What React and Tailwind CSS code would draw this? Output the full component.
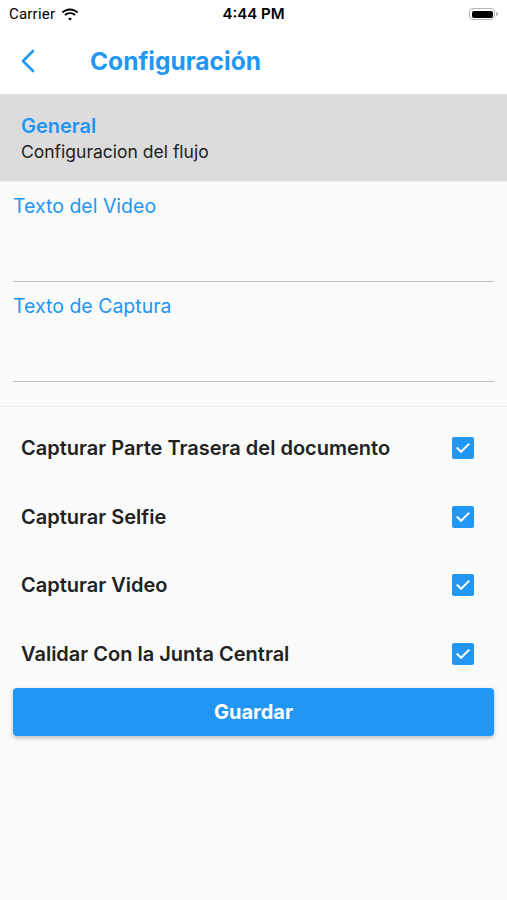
import React, { useState } from 'react';

const options = [
  'Capturar Parte Trasera del documento',
  'Capturar Selfie',
  'Capturar Video',
  'Validar Con la Junta Central',
];

const WifiIcon = () => (
  <svg width="18" height="13" viewBox="0 0 17 12" fill="#000">
    <path d="M8.5 2.2c2.5 0 4.8 1 6.5 2.6l1.3-1.3C14.2 1.5 11.5.3 8.5.3S2.8 1.5.7 3.5L2 4.8c1.7-1.6 4-2.6 6.5-2.6z" />
    <path d="M8.5 5.6c1.6 0 3 .6 4.1 1.6l1.3-1.3C12.5 4.6 10.6 3.8 8.5 3.8S4.5 4.6 3.1 5.9l1.3 1.3c1.1-1 2.5-1.6 4.1-1.6z" />
    <path d="M8.5 9c.7 0 1.3.3 1.8.7L8.5 11.6 6.7 9.7c.5-.4 1.1-.7 1.8-.7z" />
  </svg>
);

const Checkbox = ({ checked, onChange }) => (
  <button
    type="button"
    onClick={onChange}
    className={`flex h-[22px] w-[22px] items-center justify-center rounded-[2px] ${checked ? 'bg-[#2196f3]' : 'border-2 border-[#757575] bg-transparent'}`}
  >
    {checked && (
      <svg width="16" height="16" viewBox="0 0 16 16" fill="none">
        <path d="M2.5 8.2l3.6 3.6L13.6 4.3" stroke="#fff" strokeWidth="2" strokeLinecap="square" />
      </svg>
    )}
  </button>
);

const App = () => {
  const [checks, setChecks] = useState([true, true, true, true]);
  const [videoText, setVideoText] = useState('');
  const [captureText, setCaptureText] = useState('');

  const toggle = (i) => setChecks((prev) => prev.map((c, idx) => (idx === i ? !c : c)));

  return (
    <div className="flex min-h-[900px] w-full flex-col bg-[#fafafa] font-['Inter',sans-serif]">
      {/* status bar */}
      <div className="flex h-[28px] items-center justify-between bg-white px-[9px] text-[15px] text-black">
        <div className="flex w-[120px] items-center gap-[6px]">
          <span className="font-['Roboto',sans-serif] tracking-[0.2px]">Carrier</span>
          <WifiIcon />
        </div>
        <span className="font-semibold">4:44 PM</span>
        <div className="flex w-[120px] justify-end">
          <div className="flex items-center">
            <div className="h-[12px] w-[26px] rounded-[4px] border border-[#b5b5b5] p-[1.5px]">
              <div className="h-full w-full rounded-[2px] bg-black" />
            </div>
            <div className="ml-[1px] h-[4px] w-[1.5px] rounded-r bg-[#b5b5b5]" />
          </div>
        </div>
      </div>

      {/* nav bar */}
      <div className="flex h-[66px] items-center bg-white">
        <button type="button" className="flex w-[90px] items-center pl-[19px]">
          <svg width="18" height="26" viewBox="0 0 18 26" fill="none">
            <path d="M14 3L4 13l10 10" stroke="#2196f3" strokeWidth="2.6" strokeLinecap="round" strokeLinejoin="round" />
          </svg>
        </button>
        <h1 className="text-[24.5px] font-bold text-[#2196f3]">Configuración</h1>
      </div>

      {/* general header */}
      <div className="flex h-[87px] flex-col justify-center bg-[#dcdcdc] px-[21px] pt-[2px]">
        <p className="text-[20px] font-semibold leading-[27px] text-[#2196f3]">General</p>
        <p className="text-[17.5px] leading-[24px] text-[#222]">Configuracion del flujo</p>
      </div>

      {/* text inputs */}
      <div className="border-t border-[#eeeeee] border-b px-[13px] pb-[24px]">
        <div className="pt-[12px]">
          <label className="block text-[19.5px] leading-[24px] text-[#2196f3]">Texto del Video</label>
          <input
            value={videoText}
            onChange={(e) => setVideoText(e.target.value)}
            className="mt-[12px] h-[52px] w-full border-b-[1.5px] border-[#bdbdbd] bg-transparent text-[16px] outline-none"
          />
        </div>
        <div className="pt-[12px]">
          <label className="block text-[19.5px] leading-[24px] text-[#2196f3]">Texto de Captura</label>
          <input
            value={captureText}
            onChange={(e) => setCaptureText(e.target.value)}
            className="mt-[12px] h-[52px] w-full border-b-[1.5px] border-[#bdbdbd] bg-transparent text-[16px] outline-none"
          />
        </div>
      </div>

      {/* checkboxes */}
      <div className="flex flex-col pt-[7px]">
        {options.map((label, i) => (
          <div key={label} className="flex h-[68.5px] items-center justify-between pl-[21px] pr-[33px]">
            <span className="text-[20px] font-semibold text-[#222]">{label}</span>
            <Checkbox checked={checks[i]} onChange={() => toggle(i)} />
          </div>
        ))}
      </div>

      <div className="px-[13px]">
        <button
          type="button"
          className="h-[48px] w-full rounded-[4px] bg-[#2196f3] text-[20px] font-bold text-white shadow-[0_2px_4px_rgba(0,0,0,0.25)]"
        >
          Guardar
        </button>
      </div>
    </div>
  );
};

export default App;
